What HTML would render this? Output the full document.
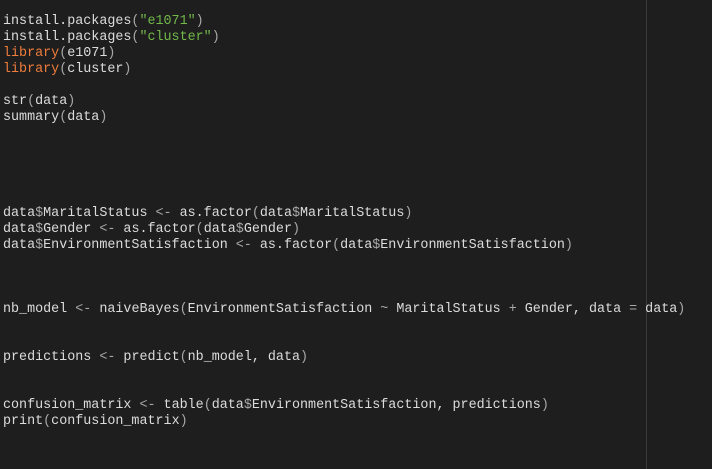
<!DOCTYPE html>
<html><head><meta charset="utf-8"><style>
html,body{margin:0;padding:0;background:#1e1e1e;width:712px;height:469px;overflow:hidden}
.g{position:absolute;left:646px;top:0;width:1px;height:469px;background:#3a3a3a}
pre{position:absolute;left:3px;top:14px;margin:0;font-family:"Liberation Mono",monospace;font-size:13.39px;line-height:16px;color:#dcdcdc}
.o{color:#f07c3c}.s{color:#72b84a}.p{color:#a8a8a8}
</style></head><body><div class="g"></div><pre>install.packages<span class="p">(</span><span class="s">"e1071"</span><span class="p">)</span>
install.packages<span class="p">(</span><span class="s">"cluster"</span><span class="p">)</span>
<span class="o">library</span><span class="p">(</span>e1071<span class="p">)</span>
<span class="o">library</span><span class="p">(</span>cluster<span class="p">)</span>

str<span class="p">(</span>data<span class="p">)</span>
summary<span class="p">(</span>data<span class="p">)</span>





data<span class="p">$</span>MaritalStatus <span class="p">&lt;-</span> as.factor<span class="p">(</span>data<span class="p">$</span>MaritalStatus<span class="p">)</span>
data<span class="p">$</span>Gender <span class="p">&lt;-</span> as.factor<span class="p">(</span>data<span class="p">$</span>Gender<span class="p">)</span>
data<span class="p">$</span>EnvironmentSatisfaction <span class="p">&lt;-</span> as.factor<span class="p">(</span>data<span class="p">$</span>EnvironmentSatisfaction<span class="p">)</span>



nb_model <span class="p">&lt;-</span> naiveBayes<span class="p">(</span>EnvironmentSatisfaction <span class="p">~</span> MaritalStatus <span class="p">+</span> Gender, data <span class="p">=</span> data<span class="p">)</span>


predictions <span class="p">&lt;-</span> predict<span class="p">(</span>nb_model, data<span class="p">)</span>


confusion_matrix <span class="p">&lt;-</span> table<span class="p">(</span>data<span class="p">$</span>EnvironmentSatisfaction, predictions<span class="p">)</span>
print<span class="p">(</span>confusion_matrix<span class="p">)</span>
</pre></body></html>
